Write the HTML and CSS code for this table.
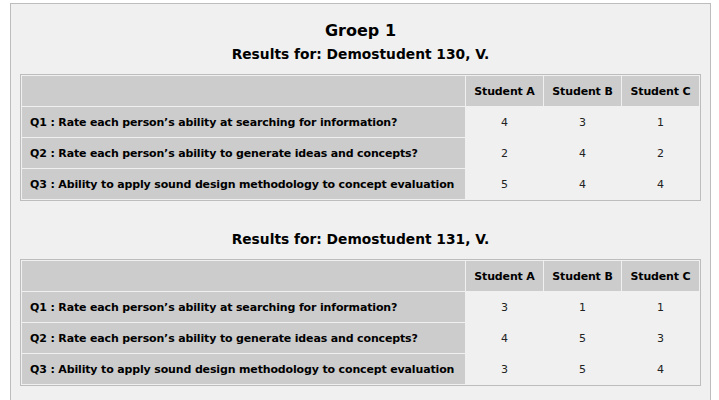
FILE: index.html
```html
<!DOCTYPE html>
<html>
<head>
<meta charset="utf-8">
<link rel="stylesheet" href="styles.css">
</head>
<body>
<div class="panel">
  <h2 class="group-title">Groep 1</h2>
  <h3 class="result-title">Results for: Demostudent 130, V.</h3>
  <table class="results">
    <tr>
      <th class="q"></th>
      <th class="s">Student A</th>
      <th class="s">Student B</th>
      <th class="s">Student C</th>
    </tr>
    <tr><th class="q">Q1 : Rate each person’s ability at searching for information?</th><td>4</td><td>3</td><td>1</td></tr>
    <tr><th class="q">Q2 : Rate each person’s ability to generate ideas and concepts?</th><td>2</td><td>4</td><td>2</td></tr>
    <tr><th class="q">Q3 : Ability to apply sound design methodology to concept evaluation</th><td>5</td><td>4</td><td>4</td></tr>
  </table>
  <h3 class="result-title second">Results for: Demostudent 131, V.</h3>
  <table class="results">
    <tr>
      <th class="q"></th>
      <th class="s">Student A</th>
      <th class="s">Student B</th>
      <th class="s">Student C</th>
    </tr>
    <tr><th class="q">Q1 : Rate each person’s ability at searching for information?</th><td>3</td><td>1</td><td>1</td></tr>
    <tr><th class="q">Q2 : Rate each person’s ability to generate ideas and concepts?</th><td>4</td><td>5</td><td>3</td></tr>
    <tr><th class="q">Q3 : Ability to apply sound design methodology to concept evaluation</th><td>3</td><td>5</td><td>4</td></tr>
  </table>
</div>
</body>
</html>
```

FILE: styles.css
```css
html, body {
  margin: 0;
  padding: 0;
  background: #ffffff;
}
body {
  font-family: "DejaVu Sans", Verdana, sans-serif;
  color: #000;
}
.panel {
  margin: 3px 0 0 10px;
  width: 681px;
  padding: 17px 9px 40px;
  border: 1px solid #bdbdbd;
  background: #f0f0f0;
}
.group-title {
  margin: 0;
  font-size: 16px;
  line-height: 20px;
  font-weight: bold;
  text-align: center;
}
.result-title {
  margin: 5px 0 12px;
  font-size: 13.8px;
  line-height: 16px;
  font-weight: bold;
  text-align: center;
}
.result-title.second {
  margin-top: 30px;
}
.results {
  width: 681px;
  table-layout: fixed;
  border-collapse: separate;
  border-spacing: 1px;
  border: 1px solid #bdbdbd;
  background: #f0f0f0;
  font-size: 11px;
  letter-spacing: -0.15px;
}
.results th,
.results td {
  box-sizing: border-box;
  height: 30px;
  padding: 0 2px 0 8px;
  vertical-align: middle;
  white-space: nowrap;
}
.results th {
  background: #cccccc;
  font-weight: bold;
  color: #000;
}
.results th.q {
  width: 443px;
  text-align: left;
}
.results th.s {
  width: 77px;
  padding: 0;
  text-align: center;
}
.results td {
  padding: 0;
  background: #f0f0f0;
  text-align: center;
  color: #222;
}
```
